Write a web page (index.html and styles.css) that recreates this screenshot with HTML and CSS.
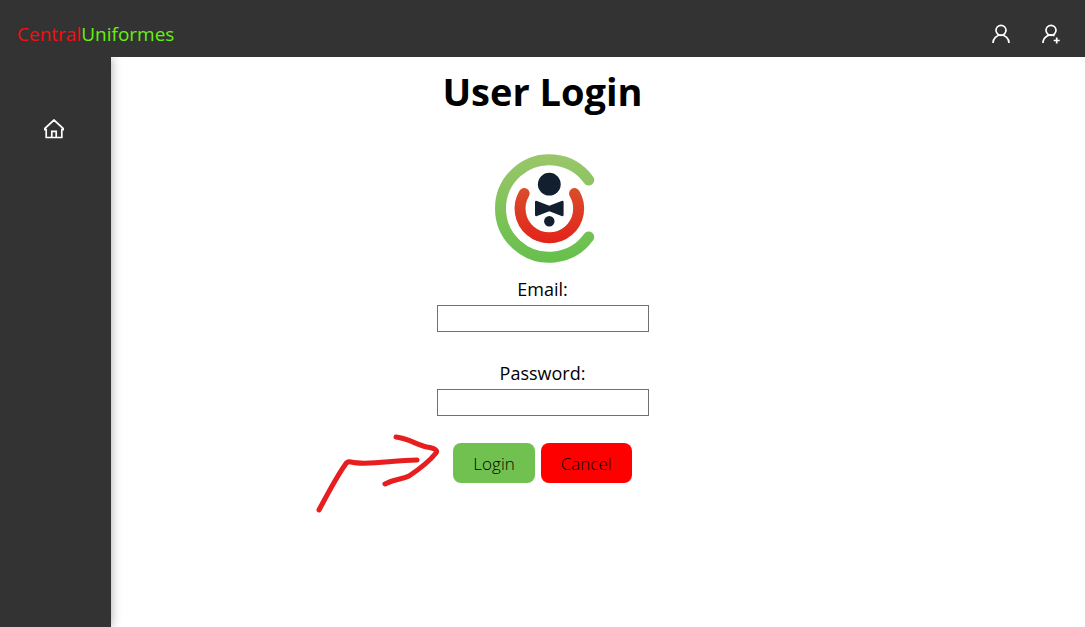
FILE: index.html
```html
<!DOCTYPE html>
<html lang="en">
<head>
<meta charset="utf-8">
<meta name="viewport" content="width=device-width, initial-scale=1">
<title>User Login</title>
<link rel="stylesheet" href="styles.css">
</head>
<body class="page">
<header class="topbar">
  <a class="brand" href="#"><span class="brand-first">Central</span><span class="brand-second">Uniformes</span></a>
  <nav class="account" aria-label="Account">
    <a class="icon-link" href="#" aria-label="Log in">
      <svg class="icon" viewBox="0 0 20 20"><circle cx="10" cy="6.300" r="5"/><path d="M2 19a8 8 0 0 1 16 0"/></svg>
    </a>
    <a class="icon-link" href="#" aria-label="Register">
      <svg class="icon" viewBox="0 0 20 20"><circle cx="10" cy="6.300" r="5"/><path d="M2 19a8 8 0 0 1 11.500-7.200M15.700 13.500v6M12.700 16.500h6"/></svg>
    </a>
  </nav>
</header>
<div class="body">
  <aside class="sidebar">
    <a class="icon-link" href="#" aria-label="Home">
      <svg class="icon" viewBox="0 0 20 20"><path d="M.7 10.600V9.500L10 1l9.300 8.500v1.100h-1.500V18.500H2.200v-7.900zM7.800 18v-5.700h4.400V18"/></svg>
    </a>
  </aside>
  <main class="content">
    <h1 class="title">User Login</h1>
    <svg class="logo" viewBox="0 0 120 120" role="img" aria-label="Central Uniformes">
      <defs>
        <linearGradient id="green" gradientUnits="userSpaceOnUse" x1="0" y1="6" x2="0" y2="115"><stop offset="0" stop-color="#9bc66a"/><stop offset="1" stop-color="#65c04b"/></linearGradient>
        <linearGradient id="red" gradientUnits="userSpaceOnUse" x1="0" y1="40" x2="0" y2="95"><stop offset="0" stop-color="#d94e2b"/><stop offset="1" stop-color="#e3231a"/></linearGradient>
      </defs>
      <path class="ring" stroke="url(#green)" d="M105.700 32A48.700 48.700 0 1 0 105.700 89"/>
      <path class="ring" stroke="url(#red)" d="M41.200 45.500A29.300 29.300 0 1 0 91.500 45.500"/>
      <g fill="#111f2e"><circle cx="66.300" cy="36.200" r="11.400"/><circle cx="66.300" cy="73.200" r="5.200"/><path d="M52 54.300q0-2 2-1.200l12.300 4.700 12.300-4.700q2-.8 2 1.200v12.400q0 2-2 1.200L66.300 63.200 54 67.900q-2 .8-2-1.200z"/></g>
    </svg>
    <form class="form">
      <div class="field">
        <label class="label" for="email">Email:</label>
        <input class="input" id="email" type="email">
      </div>
      <div class="field">
        <label class="label" for="password">Password:</label>
        <input class="input" id="password" type="password">
      </div>
      <div class="actions">
        <button class="button login" type="submit">Login</button>
        <button class="button cancel" type="button">Cancel</button>
        <svg class="arrow" viewBox="0 0 130 84" aria-hidden="true"><path d="M6 77C14 62 24 43 32 32q2-4 6-3c16 4 42-2 66-2M83 4c14 2 21 8 31 10q12 2 9 6c-8 10-18 17-27 23-8 4-12 2-24 8"/></svg>
      </div>
    </form>
  </main>
</div>
</body>
</html>
```
FILE: styles.css
```css
* {
  box-sizing: border-box;
}

.page {
  display: flex;
  flex-direction: column;
  min-height: 100vh;
  margin: 0;
  background: #fff;
  color: #000;
  font-family: "Segoe UI", "Open Sans", "Noto Sans", sans-serif;
}

.topbar {
  display: flex;
  align-items: center;
  justify-content: space-between;
  padding: 20px 24px 9px 17px;
  background: #333;
}

.brand {
  font-size: 19px;
  line-height: 28px;
  text-decoration: none;
}

.brand-first {
  color: #f40f10;
}

.brand-second {
  color: #66f10d;
}

.account {
  display: flex;
  gap: 30px;
}

.icon-link {
  display: flex;
}

.icon {
  width: 20px;
  height: 20px;
  fill: none;
  stroke: #fff;
  stroke-width: 1.7;
}

.body {
  display: flex;
  flex: 1;
}

.sidebar {
  display: flex;
  align-items: flex-start;
  justify-content: center;
  width: 111px;
  padding: 62px 3px 0 0;
  background: #333;
  box-shadow: 0 0 10px rgba(0, 0, 0, 0.35);
  clip-path: inset(0 -16px 0 0);
}

.content {
  display: flex;
  flex: 1;
  flex-direction: column;
  align-items: center;
  padding: 6px 111px 0 0;
}

.title {
  margin: 0;
  font-size: 38px;
  font-weight: 700;
  line-height: 56px;
}

.logo {
  width: 120px;
  height: 120px;
  margin-top: 29px;
}

.ring {
  fill: none;
  stroke-width: 11;
  stroke-linecap: round;
}

.form {
  display: flex;
  flex-direction: column;
  align-items: center;
  gap: 27px;
  margin-top: 7px;
}

.field {
  display: flex;
  flex-direction: column;
  align-items: center;
  gap: 2px;
}

.label {
  font-size: 18px;
  line-height: 28px;
}

.input {
  width: 212px;
  height: 27px;
  border: 1px solid #707070;
  background: #fff;
}

.actions {
  position: relative;
  display: flex;
  gap: 6px;
}

.button {
  height: 40px;
  padding: 0 20px;
  border: 0;
  border-radius: 8px;
  color: #000;
  font-family: inherit;
  font-size: 17px;
  font-weight: 300;
}

.login {
  background: #70c150;
}

.cancel {
  background: #f00;
}

.arrow {
  position: absolute;
  top: -10px;
  right: calc(100% + 10px);
  width: 130px;
  height: 84px;
  fill: none;
  stroke: #e71d1f;
  stroke-width: 5;
  stroke-linecap: round;
  stroke-linejoin: round;
}
```
